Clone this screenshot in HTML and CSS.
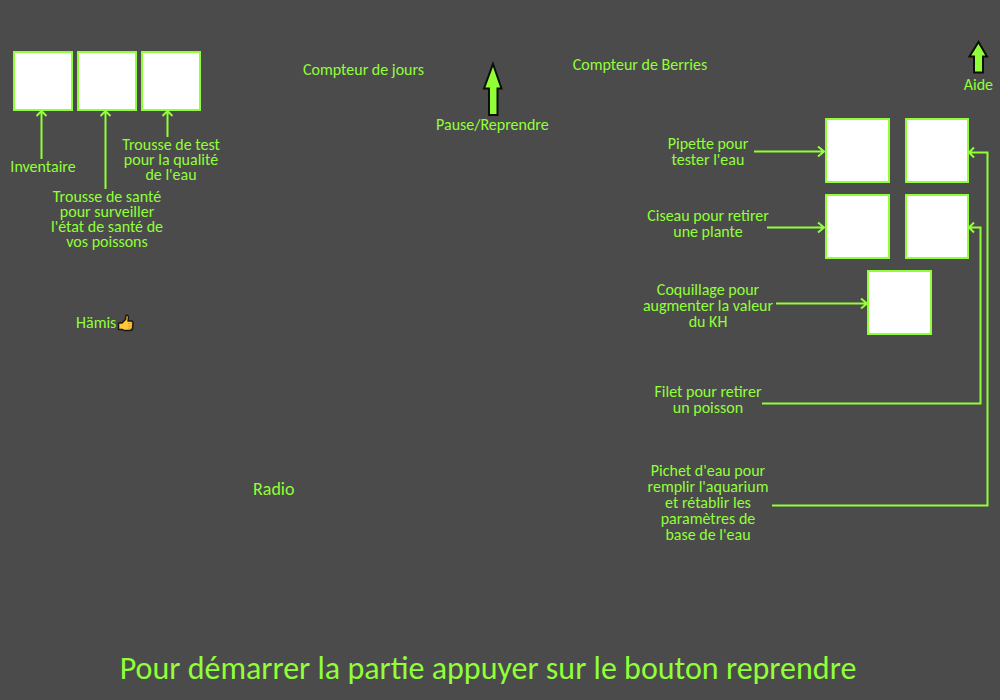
FILE: index.html
```html
<!DOCTYPE html>
<html lang="fr">
<head>
<meta charset="utf-8">
<meta name="viewport" content="width=device-width, initial-scale=1">
<title>Aide</title>
<link rel="stylesheet" href="styles.css">
</head>
<body>
<main class="scene">
  <section class="left">
    <div class="kits">
      <div class="kit">
        <button class="slot slot-small" type="button" aria-labelledby="l-inv"></button>
        <svg class="pointer" width="60" height="48" viewBox="0 0 60 48" aria-hidden="true"><path d="M28.500 48V0M23.500 5L28.500 0L33.500 5"/></svg>
        <p class="label" id="l-inv">Inventaire</p>
      </div>
      <div class="kit">
        <button class="slot slot-small" type="button" aria-labelledby="l-sante"></button>
        <svg class="pointer" width="60" height="78" viewBox="0 0 60 78" aria-hidden="true"><path d="M28.500 78V0M23.500 5L28.500 0L33.500 5"/></svg>
        <p class="label" id="l-sante">Trousse de santé<br>pour surveiller<br>l'état de santé de<br>vos poissons</p>
      </div>
      <div class="kit">
        <button class="slot slot-small" type="button" aria-labelledby="l-test"></button>
        <svg class="pointer" width="60" height="26" viewBox="0 0 60 26" aria-hidden="true"><path d="M26.500 26V0M21.500 5L26.500 0L31.500 5"/></svg>
        <p class="label" id="l-test">Trousse de test<br>pour la qualité<br>de l'eau</p>
      </div>
    </div>
    <p class="label player">Hämis
      <svg width="17" height="18" viewBox="0 0 17 18" aria-hidden="true"><path d="M1.500 9H5L8.500 5.500L9 1.500Q11.200 .5 11.500 3.500L11 7H14.500Q16.200 7.500 16 9.500L15.500 14.500Q15 16.500 12.500 16.500H7L5.500 15.500H1.500Z" fill="#ffc83d" stroke="#1b1712" stroke-width="1.500" stroke-linejoin="round"/><path d="M11 9.500H15M11 12H15M11 14.300H14" stroke="#d99a22" stroke-width=".8"/></svg>
    </p>
    <p class="radio">Radio</p>
  </section>

  <header class="top">
    <p class="label days">Compteur de jours</p>
    <div class="pause">
      <svg width="22" height="56" viewBox="0 0 22 56" aria-hidden="true"><path class="big-arrow" d="M12 3L20.500 27.500H16.500V54H8V27.500H3Z"/></svg>
      <p class="label">Pause/Reprendre</p>
    </div>
    <p class="label berries">Compteur de Berries</p>
    <div class="help">
      <svg width="22" height="34" viewBox="0 0 22 34" aria-hidden="true"><path class="big-arrow" d="M11.500 2L20 16.500H16V32.500H7V16.500H2.500Z"/></svg>
      <p class="label">Aide</p>
    </div>
  </header>

  <section class="tools">
    <div class="legend">
      <p class="label row" id="l-pip">Pipette pour<br>tester l'eau</p>
      <p class="label row" id="l-cis">Ciseau pour retirer<br>une plante</p>
      <p class="label row" id="l-coq">Coquillage pour<br>augmenter la valeur<br>du KH</p>
      <p class="label net" id="l-fil">Filet pour retirer<br>un poisson</p>
      <p class="label jug" id="l-pic">Pichet d'eau pour<br>remplir l'aquarium<br>et rétablir les<br>paramètres de<br>base de l'eau</p>
    </div>
    <div class="slots">
      <button class="slot" type="button" aria-labelledby="l-pip"></button>
      <button class="slot" type="button" aria-labelledby="l-pic"></button>
      <button class="slot" type="button" aria-labelledby="l-cis"></button>
      <button class="slot" type="button" aria-labelledby="l-fil"></button>
      <button class="slot slot-wide" type="button" aria-labelledby="l-coq"></button>
    </div>
    <svg class="wires" width="360" height="400" viewBox="0 0 360 400" aria-hidden="true">
      <path d="M114 33.500H184M178 28.500L184 33.500L178 38.500"/>
      <path d="M127 109.500H184M178 104.500L184 109.500L178 114.500"/>
      <path d="M136 185.500H227M221 180.500L227 185.500L221 190.500"/>
      <path d="M334 29.500L329 34.500L334 39.500M329 34.500H347.500V387.500H132"/>
      <path d="M334 104.500L329 109.500L334 114.500M329 109.500H340.500V285.500H122"/>
    </svg>
  </section>

  <footer class="start">Pour démarrer la partie appuyer sur le bouton reprendre</footer>
</main>
</body>
</html>
```

FILE: styles.css
```css
* {
  box-sizing: border-box;
}

body {
  margin: 0;
  background: #4b4b4b;
  color: #90ff38;
  font-family: Carlito, Calibri, Lato, sans-serif;
}

p {
  margin: 0;
}

svg {
  display: block;
  flex: none;
}

.scene {
  display: grid;
  grid-template-columns: 303px 1fr 360px;
  grid-template-rows: 118px 1fr auto;
  min-height: 100vh;
}

.label {
  font-size: 16px;
  line-height: 16px;
  text-align: center;
  white-space: nowrap;
}

.slot {
  width: 100%;
  height: 65px;
  padding: 0;
  border: 2px solid #90ff38;
  border-radius: 0;
  background: #fff;
}

.slot-small {
  width: 60px;
  height: 60px;
}

.pointer path,
.wires path {
  fill: none;
  stroke: #90ff38;
  stroke-width: 2;
}

.big-arrow {
  fill: #90ff38;
  stroke: #0c0f08;
  stroke-width: 2;
}

.left {
  grid-row: 1 / 3;
  padding: 51px 0 0 13px;
}

.kits {
  display: flex;
  gap: 4px;
  height: 263px;
}

.kit {
  display: flex;
  flex-direction: column;
  align-items: center;
  width: 60px;
}

.kits .label {
  line-height: 15px;
}

.player {
  display: flex;
  align-items: center;
  gap: 1px;
  padding-left: 63px;
}

.radio {
  margin-top: 147px;
  padding-left: 240px;
  font-size: 18px;
  line-height: 20px;
}

.top {
  grid-column: 2 / 4;
  display: flex;
  align-items: flex-start;
}

.days {
  padding-top: 62px;
}

.pause {
  display: flex;
  flex-direction: column;
  align-items: center;
  margin-left: 12px;
  padding-top: 61px;
}

.berries {
  margin-left: 24px;
  padding-top: 57px;
}

.help {
  display: flex;
  flex-direction: column;
  align-items: center;
  gap: 3px;
  margin-left: auto;
  padding: 40px 7px 0 0;
}

.tools {
  grid-column: 3;
  position: relative;
  display: flex;
  justify-content: space-between;
  padding-right: 31px;
}

.legend {
  display: flex;
  flex-direction: column;
  width: 136px;
}

.row {
  display: flex;
  flex-direction: column;
  justify-content: center;
  height: 75px;
}

.row:first-child {
  height: 68px;
}

.row:nth-child(3) {
  height: 90px;
}

.net {
  margin-top: 33px;
}

.jug {
  margin-top: 47px;
}

.slots {
  display: grid;
  grid-template-columns: 65px 64px;
  grid-auto-rows: 65px;
  gap: 11px 15px;
  align-content: start;
}

.slot-wide {
  grid-column: 1 / 3;
  width: 65px;
  margin-left: 42px;
}

.wires {
  position: absolute;
  top: 0;
  left: 0;
}

.start {
  grid-column: 1 / 4;
  padding: 0 24px 11px 0;
  font-size: 32px;
  line-height: 40px;
  text-align: center;
}
```
